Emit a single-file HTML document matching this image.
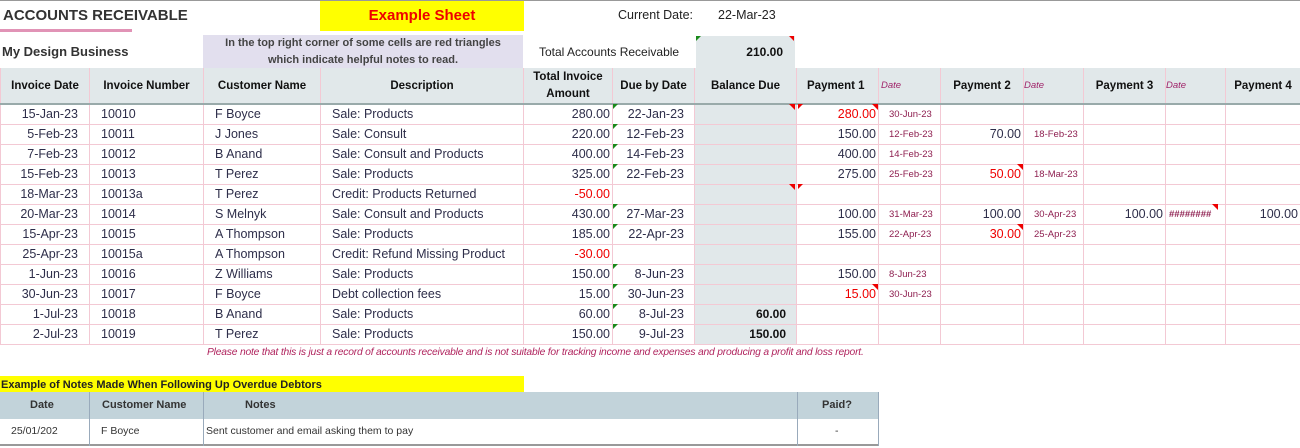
<!DOCTYPE html>
<html><head><style>
*{margin:0;padding:0;box-sizing:border-box}
body{width:1300px;height:448px;background:#fff;position:relative;overflow:hidden;font-family:"Liberation Sans Narrow","Liberation Sans",sans-serif;color:#333;}
.a{position:absolute}
table{border-collapse:collapse;table-layout:fixed;position:absolute}
td{height:20px;font-size:12.5px;white-space:nowrap;overflow:hidden;border:1px solid #f3c9d4;color:#2e2e4a}
.h td{height:36px;background:#e1e8ea;font-family:"Liberation Sans",sans-serif;font-weight:bold;font-size:11.5px;text-align:center;color:#111;border-bottom:2px solid #9aa;border-top:none;line-height:14px}
.r{text-align:right;padding-right:2px}
.l{padding-left:11px}
.g{background:#e1e8ea}
.d{font-size:9.5px;color:#8e1f50;padding-left:10px}
.red{color:#e00}
.tri{position:absolute;width:0;height:0;border-left:6px solid transparent;border-top:6px solid #e00}
</style></head><body>
<div class="a" style="left:0;top:0;width:1300px;height:1px;background:#999"></div>
<div class="a" style="left:3px;top:7px;font-family:'Liberation Sans',sans-serif;font-weight:bold;font-size:15px;color:#333">ACCOUNTS RECEIVABLE</div>
<div class="a" style="left:0;top:29px;width:132px;height:3px;background:#e193b6"></div>
<div class="a" style="left:320px;top:1px;width:204px;height:30px;background:#ff0;color:#e00;font-family:'Liberation Sans',sans-serif;font-weight:bold;font-size:15px;text-align:center;line-height:30px">Example Sheet</div>
<div class="a" style="left:618px;top:8px;font-size:12.5px;color:#222">Current Date:</div>
<div class="a" style="left:718px;top:8px;font-size:12.5px;color:#222">22-Mar-23</div>
<div class="a" style="left:2px;top:44px;font-family:'Liberation Sans',sans-serif;font-weight:bold;font-size:13px;color:#333">My Design Business</div>
<div class="a" style="left:203px;top:35px;width:320px;height:33px;background:#e2dfee;font-family:'Liberation Sans',sans-serif;font-weight:bold;font-size:11px;text-align:center;line-height:17px;color:#444">In the top right corner of some cells are red triangles<br>which indicate helpful notes to read.</div>
<div class="a" style="left:539px;top:45px;font-size:12px;color:#222">Total Accounts Receivable</div>
<div class="a" style="left:696px;top:36px;width:99px;height:32px;background:#e1e8ea;font-family:'Liberation Sans',sans-serif;font-weight:bold;font-size:12px;text-align:right;padding-right:12px;line-height:33px;color:#111">210.00</div>
<div class="a" style="left:696px;top:36px;border-right:5px solid transparent;border-top:5px solid #1a8a1a"></div>
<div class="a" style="left:789px;top:36px;border-left:5px solid transparent;border-top:5px solid #e00"></div>

<table style="left:0;top:68px;width:1300px">
<colgroup><col style="width:89px"><col style="width:114px"><col style="width:117px"><col style="width:203px"><col style="width:89px"><col style="width:82px"><col style="width:102px"><col style="width:82px"><col style="width:62px"><col style="width:83px"><col style="width:60px"><col style="width:82px"><col style="width:60px"><col style="width:75px"></colgroup>
<tr class="h"><td>Invoice Date</td><td>Invoice Number</td><td>Customer Name</td><td>Description</td><td style="line-height:17px">Total Invoice<br>Amount</td><td>Due by Date</td><td>Balance Due</td><td style="text-align:left;padding-left:10px">Payment 1</td><td style="text-align:left;font-weight:normal;font-style:italic;font-size:9.5px;color:#a0246a;padding-left:2px">Date</td><td>Payment 2</td><td style="text-align:left;font-weight:normal;font-style:italic;font-size:9.5px;color:#a0246a">Date</td><td>Payment 3</td><td style="text-align:left;font-weight:normal;font-style:italic;font-size:9.5px;color:#a0246a">Date</td><td>Payment 4</td></tr>
<tr><td class="r" style="padding-right:11px">15-Jan-23</td><td class="l">10010</td><td class="l">F Boyce</td><td class="l">Sale: Products</td><td class="r">280.00</td><td class="r" style="padding-right:10px">22-Jan-23</td><td class="g"></td><td class="r red">280.00</td><td class="d">30-Jun-23</td><td></td><td></td><td></td><td></td><td></td></tr>
<tr><td class="r" style="padding-right:11px">5-Feb-23</td><td class="l">10011</td><td class="l">J Jones</td><td class="l">Sale: Consult</td><td class="r">220.00</td><td class="r" style="padding-right:10px">12-Feb-23</td><td class="g"></td><td class="r">150.00</td><td class="d">12-Feb-23</td><td class="r">70.00</td><td class="d">18-Feb-23</td><td></td><td></td><td></td></tr>
<tr><td class="r" style="padding-right:11px">7-Feb-23</td><td class="l">10012</td><td class="l">B Anand</td><td class="l">Sale: Consult and Products</td><td class="r">400.00</td><td class="r" style="padding-right:10px">14-Feb-23</td><td class="g"></td><td class="r">400.00</td><td class="d">14-Feb-23</td><td></td><td></td><td></td><td></td><td></td></tr>
<tr><td class="r" style="padding-right:11px">15-Feb-23</td><td class="l">10013</td><td class="l">T Perez</td><td class="l">Sale: Products</td><td class="r">325.00</td><td class="r" style="padding-right:10px">22-Feb-23</td><td class="g"></td><td class="r">275.00</td><td class="d">25-Feb-23</td><td class="r red">50.00</td><td class="d">18-Mar-23</td><td></td><td></td><td></td></tr>
<tr><td class="r" style="padding-right:11px">18-Mar-23</td><td class="l">10013a</td><td class="l">T Perez</td><td class="l">Credit: Products Returned</td><td class="r red">-50.00</td><td></td><td class="g"></td><td></td><td></td><td></td><td></td><td></td><td></td><td></td></tr>
<tr><td class="r" style="padding-right:11px">20-Mar-23</td><td class="l">10014</td><td class="l">S Melnyk</td><td class="l">Sale: Consult and Products</td><td class="r">430.00</td><td class="r" style="padding-right:10px">27-Mar-23</td><td class="g"></td><td class="r">100.00</td><td class="d">31-Mar-23</td><td class="r">100.00</td><td class="d">30-Apr-23</td><td class="r">100.00</td><td class="d" style="padding-left:3px;font-weight:bold">########</td><td class="r">100.00</td></tr>
<tr><td class="r" style="padding-right:11px">15-Apr-23</td><td class="l">10015</td><td class="l">A Thompson</td><td class="l">Sale: Products</td><td class="r">185.00</td><td class="r" style="padding-right:10px">22-Apr-23</td><td class="g"></td><td class="r">155.00</td><td class="d">22-Apr-23</td><td class="r red">30.00</td><td class="d">25-Apr-23</td><td></td><td></td><td></td></tr>
<tr><td class="r" style="padding-right:11px">25-Apr-23</td><td class="l">10015a</td><td class="l">A Thompson</td><td class="l">Credit: Refund Missing Product</td><td class="r red">-30.00</td><td></td><td class="g"></td><td></td><td></td><td></td><td></td><td></td><td></td><td></td></tr>
<tr><td class="r" style="padding-right:11px">1-Jun-23</td><td class="l">10016</td><td class="l">Z Williams</td><td class="l">Sale: Products</td><td class="r">150.00</td><td class="r" style="padding-right:10px">8-Jun-23</td><td class="g"></td><td class="r">150.00</td><td class="d">8-Jun-23</td><td></td><td></td><td></td><td></td><td></td></tr>
<tr><td class="r" style="padding-right:11px">30-Jun-23</td><td class="l">10017</td><td class="l">F Boyce</td><td class="l">Debt collection fees</td><td class="r">15.00</td><td class="r" style="padding-right:10px">30-Jun-23</td><td class="g"></td><td class="r red">15.00</td><td class="d">30-Jun-23</td><td></td><td></td><td></td><td></td><td></td></tr>
<tr><td class="r" style="padding-right:11px">1-Jul-23</td><td class="l">10018</td><td class="l">B Anand</td><td class="l">Sale: Products</td><td class="r">60.00</td><td class="r" style="padding-right:10px">8-Jul-23</td><td class="g r" style="padding-right:10px;font-family:'Liberation Sans',sans-serif;font-weight:bold;font-size:12px;color:#111">60.00</td><td></td><td></td><td></td><td></td><td></td><td></td><td></td></tr>
<tr><td class="r" style="padding-right:11px">2-Jul-23</td><td class="l">10019</td><td class="l">T Perez</td><td class="l">Sale: Products</td><td class="r">150.00</td><td class="r" style="padding-right:10px">9-Jul-23</td><td class="g r" style="padding-right:10px;font-family:'Liberation Sans',sans-serif;font-weight:bold;font-size:12px;color:#111">150.00</td><td></td><td></td><td></td><td></td><td></td><td></td><td></td></tr>
</table>
<div class="tri" style="left:789px;top:104px"></div>
<div class="tri" style="left:872px;top:104px"></div>
<div class="tri" style="left:789px;top:184px"></div>
<div class="tri" style="left:1017px;top:164px"></div>
<div class="tri" style="left:1017px;top:224px"></div>
<div class="tri" style="left:1212px;top:204px"></div>
<div class="tri" style="left:872px;top:284px"></div>
<div class="a" style="left:798px;top:104px;border-right:5px solid transparent;border-top:5px solid #e00"></div>
<div class="a" style="left:798px;top:184px;border-right:5px solid transparent;border-top:5px solid #e00"></div>
<div class="a" style="left:613px;top:104px;border-right:5px solid transparent;border-top:5px solid #1a8a1a"></div>
<div class="a" style="left:613px;top:124px;border-right:5px solid transparent;border-top:5px solid #1a8a1a"></div>
<div class="a" style="left:613px;top:144px;border-right:5px solid transparent;border-top:5px solid #1a8a1a"></div>
<div class="a" style="left:613px;top:164px;border-right:5px solid transparent;border-top:5px solid #1a8a1a"></div>
<div class="a" style="left:613px;top:204px;border-right:5px solid transparent;border-top:5px solid #1a8a1a"></div>
<div class="a" style="left:613px;top:224px;border-right:5px solid transparent;border-top:5px solid #1a8a1a"></div>
<div class="a" style="left:613px;top:264px;border-right:5px solid transparent;border-top:5px solid #1a8a1a"></div>
<div class="a" style="left:613px;top:284px;border-right:5px solid transparent;border-top:5px solid #1a8a1a"></div>
<div class="a" style="left:613px;top:304px;border-right:5px solid transparent;border-top:5px solid #1a8a1a"></div>
<div class="a" style="left:613px;top:324px;border-right:5px solid transparent;border-top:5px solid #1a8a1a"></div>

<div class="a" style="left:207px;top:347px;font-style:italic;font-size:10.3px;color:#b0245e;letter-spacing:-0.2px">Please note that this is just a record of accounts receivable and is not suitable for tracking income and expenses and producing a profit and loss report.</div>

<div class="a" style="left:0;top:376px;width:524px;height:16px;background:#ff0;font-weight:bold;font-size:11px;color:#222;line-height:18px;padding-left:1px">Example of Notes Made When Following Up Overdue Debtors</div>
<div class="a" style="left:0;top:392px;width:879px;height:27px;background:#c2d3da"></div>
<div class="a" style="left:0;top:419px;width:879px;height:27px;border-bottom:2px solid #999"></div>
<div class="a" style="left:89px;top:392px;width:1px;height:54px;background:#9ab"></div>
<div class="a" style="left:203px;top:392px;width:1px;height:54px;background:#9ab"></div>
<div class="a" style="left:797px;top:392px;width:1px;height:54px;background:#9ab"></div>
<div class="a" style="left:878px;top:392px;width:1px;height:54px;background:#9ab"></div>
<div class="a" style="left:30px;top:399px;font-weight:bold;font-size:11px;color:#333">Date</div>
<div class="a" style="left:102px;top:399px;font-weight:bold;font-size:11px;color:#333">Customer Name</div>
<div class="a" style="left:245px;top:399px;font-weight:bold;font-size:11px;color:#333">Notes</div>
<div class="a" style="left:822px;top:399px;font-weight:bold;font-size:11px;color:#333">Paid?</div>
<div class="a" style="left:11px;top:425px;font-size:10.5px;color:#333">25/01/202</div>
<div class="a" style="left:101px;top:425px;font-size:10.5px;color:#333">F Boyce</div>
<div class="a" style="left:206px;top:425px;font-size:10.5px;color:#333">Sent customer and email asking them to pay</div>
<div class="a" style="left:835px;top:425px;font-size:10.5px;color:#333">-</div>
</body></html>
